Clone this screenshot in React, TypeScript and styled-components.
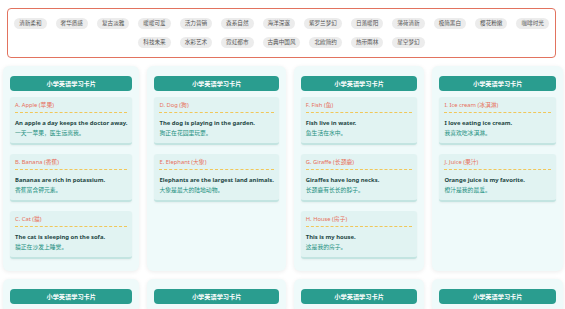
import React from 'react';
import styled, { createGlobalStyle } from 'styled-components';

interface IWord {
  title: string;
  en: string;
  zh: string;
}

const themes = [
  '清新柔和', '奢华质感', '复古淡雅', '暖暖可爱', '活力营销', '森系自然', '海洋深邃',
  '紫罗兰梦幻', '日落暖阳', '薄荷清新', '极简黑白', '樱花粉嫩', '咖啡时光',
  '科技未来', '水彩艺术', '霓虹都市', '古典中国风', '北欧简约', '热带雨林', '星空梦幻',
];

const columns: Array<Array<IWord>> = [
  [
    { title: 'A. Apple (苹果)', en: 'An apple a day keeps the doctor away.', zh: '一天一苹果，医生远离我。' },
    { title: 'B. Banana (香蕉)', en: 'Bananas are rich in potassium.', zh: '香蕉富含钾元素。' },
    { title: 'C. Cat (猫)', en: 'The cat is sleeping on the sofa.', zh: '猫正在沙发上睡觉。' },
  ],
  [
    { title: 'D. Dog (狗)', en: 'The dog is playing in the garden.', zh: '狗正在花园里玩耍。' },
    { title: 'E. Elephant (大象)', en: 'Elephants are the largest land animals.', zh: '大象是最大的陆地动物。' },
  ],
  [
    { title: 'F. Fish (鱼)', en: 'Fish live in water.', zh: '鱼生活在水中。' },
    { title: 'G. Giraffe (长颈鹿)', en: 'Giraffes have long necks.', zh: '长颈鹿有长长的脖子。' },
    { title: 'H. House (房子)', en: 'This is my house.', zh: '这是我的房子。' },
  ],
  [
    { title: 'I. Ice cream (冰淇淋)', en: 'I love eating ice cream.', zh: '我喜欢吃冰淇淋。' },
    { title: 'J. Juice (果汁)', en: 'Orange juice is my favorite.', zh: '橙汁是我的最爱。' },
  ],
];

const App: React.FC = () => {
  return (
    <>
      <GlobalStyle />
      <Page>
        <ThemeBox>
          {themes.map(t => (
            <Chip key={t}>{t}</Chip>
          ))}
        </ThemeBox>
        <Grid>
          {columns.map((col, i) => (
            <Panel key={i}>
              <Header>小学英语学习卡片</Header>
              {col.map(w => (
                <WordCard key={w.title}>
                  <Title>{w.title}</Title>
                  <English>{w.en}</English>
                  <Chinese>{w.zh}</Chinese>
                </WordCard>
              ))}
            </Panel>
          ))}
          {[0, 1, 2, 3].map(i => (
            <Panel key={`next-${i}`}>
              <Header>小学英语学习卡片</Header>
            </Panel>
          ))}
        </Grid>
      </Page>
    </>
  );
};

export default App;

const GlobalStyle = createGlobalStyle`
  html, body {
    margin: 0;
    padding: 0;
    background: #fff;
    overflow: hidden;
  }
  body {
    font-family: "Noto Sans", "Noto Sans CJK SC", sans-serif;
  }
`;

const Page = styled.div`
  width: 565px;
  padding: 8px 9px 0 3px;
  box-sizing: border-box;
`;

const ThemeBox = styled.div`
  margin-left: 4px;
  border: 1.5px solid #e2735f;
  border-radius: 4px;
  padding: 8.5px 2px 9px;
  display: flex;
  flex-wrap: wrap;
  justify-content: center;
  gap: 8px 9px;
`;

const Chip = styled.span`
  background: #ececec;
  border-radius: 6px;
  height: 11px;
  padding: 0 5px;
  display: flex;
  align-items: center;
  font-size: 5.6px;
  color: #555;
  font-family: "Noto Sans CJK SC", sans-serif;
`;

const Grid = styled.div`
  margin-top: 8px;
  display: grid;
  grid-template-columns: repeat(4, 1fr);
  gap: 8px;
  width: 560px;
`;

const Panel = styled.div`
  background: #effafa;
  border-radius: 6px;
  box-shadow: 0 1px 4px rgba(0, 0, 0, 0.08);
  padding: 10px 7px 12px;
  display: flex;
  flex-direction: column;
  gap: 9px;
`;

const Header = styled.div`
  background: #2a9d8f;
  color: #fff;
  border-radius: 4px;
  height: 15px;
  display: flex;
  align-items: center;
  justify-content: center;
  font-size: 6.2px;
  font-weight: bold;
  font-family: "Noto Sans CJK SC", sans-serif;
  margin-bottom: -3px;
`;

const WordCard = styled.div`
  background: #e1f3f2;
  border-radius: 3px;
  border-bottom: 2px solid #c3e4e1;
  padding: 4px 5px 6px;
  box-shadow: 0 1px 2px rgba(0, 0, 0, 0.05);
`;

const Title = styled.div`
  color: #e76f5a;
  font-size: 5.8px;
  line-height: 8px;
  padding-bottom: 3px;
  border-bottom: 1px dashed #f0c75a;
  margin-bottom: 6px;
`;

const English = styled.div`
  color: #1d4744;
  font-size: 5.9px;
  font-weight: bold;
  line-height: 8px;
  margin-bottom: 2px;
  white-space: nowrap;
`;

const Chinese = styled.div`
  color: #23907f;
  font-size: 5.8px;
  line-height: 8px;
`;
